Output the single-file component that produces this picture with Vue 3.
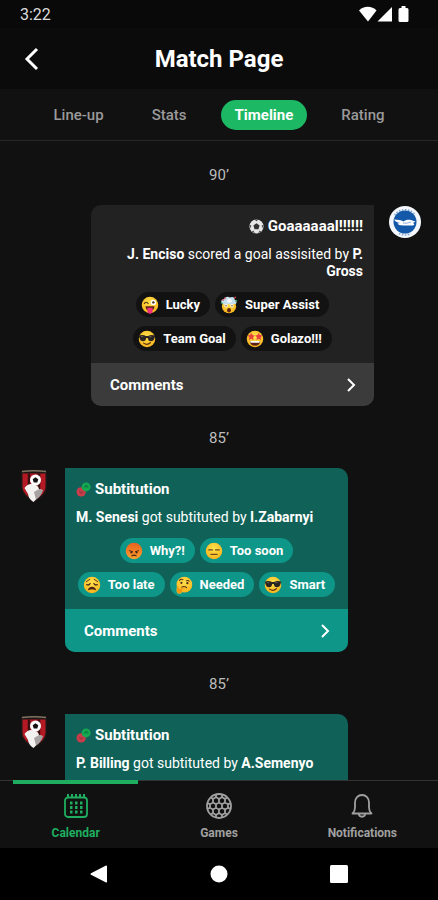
<template>
    <div class="screen">
        <!-- Shared drawings -->
        <svg class="sprites" aria-hidden="true" width="0" height="0">
            <defs>
                <radialGradient id="face" cx="50%" cy="35%" r="65%">
                    <stop offset="0" stop-color="#ffe14d" />
                    <stop offset="1" stop-color="#f9b41c" />
                </radialGradient>
                <linearGradient id="anger" x1="0" y1="0" x2="0" y2="1">
                    <stop offset="0" stop-color="#e8601f" />
                    <stop offset="1" stop-color="#fba22c" />
                </linearGradient>
            </defs>
            <symbol id="emoji-wink" viewBox="0 0 24 24">
                <circle cx="12" cy="12" r="11" fill="url(#face)" />
                <circle cx="16.5" cy="8.5" r="3.6" fill="#fff" />
                <circle cx="16.5" cy="8.5" r="1.6" fill="#4a2c17" />
                <path d="M4.5 10c1-2.2 3.8-2.2 5 0" stroke="#4a2c17" stroke-width="1.5" fill="none" stroke-linecap="round" />
                <path d="M6 13.5h12c0 4-2.500 6-6 6s-6-2-6-6z" fill="#5c2314" />
                <path d="M8.5 15.5h7v4.500a3.5 3.5 0 0 1-7 0z" fill="#f0307e" />
            </symbol>
            <symbol id="emoji-blown" viewBox="0 0 24 24">
                <circle cx="12" cy="13.5" r="9.5" fill="url(#face)" />
                <path d="M2.5 10c-2-3 0-6 3-5.5C6 1 11 0 13 2c4-2 7 0 6.500 3 3 0 3.500 4 1.500 5.500-3 1-5-1-7 1-2-1.500-4 .5-6-1-2 1.500-4 .8-5.500-.5z" fill="#c5dfee" />
                <path d="M10 5l2-2 3 1 1 4-4 1-3-1z" fill="#f4f8fa" />
                <path d="M3 5l2 1M19 3l2-2M6 2l1 2" stroke="#e43d50" stroke-width="1.5" />
                <path d="M1 9l3 1M20 7l3-1" stroke="#38a65a" stroke-width="1.5" />
                <circle cx="8" cy="13" r="2.2" fill="#fff" />
                <circle cx="16" cy="13" r="2.2" fill="#fff" />
                <circle cx="8" cy="13" r="0.9" fill="#4a2c17" />
                <circle cx="16" cy="13" r="0.9" fill="#4a2c17" />
                <ellipse cx="12" cy="19" rx="2.5" ry="3" fill="#5c2314" />
            </symbol>
            <symbol id="emoji-cool" viewBox="0 0 24 24">
                <circle cx="12" cy="12" r="11" fill="url(#face)" />
                <path d="M1 7.5c4-1.2 7-.8 9.5.5h3C16 6.7 19 6.3 23 7.5l-.8 2.5c-.8 4-2.500 5-5 5-2.700 0-3.700-2-4.200-4.500h-2C10.500 13 9.500 15 6.800 15c-2.500 0-4.200-1-5-5z" fill="#2a2522" />
                <path d="M4 9l3-.3M15 9l3-.3" stroke="#77706b" stroke-width="1" />
                <path d="M7.5 17.5c3 2.2 6 2 9-.5" stroke="#5c2e14" stroke-width="1.6" fill="none" stroke-linecap="round" />
            </symbol>
            <symbol id="emoji-star" viewBox="0 0 24 24">
                <circle cx="12" cy="12" r="11" fill="url(#face)" />
                <path d="M7 3.5l1.6 3.2 3.2.5-2.4 2.5.6 3.5L7 11.5l-3.2 1.7.7-3.5L2.2 7.200l3.3-.5zM17 3.5l1.5 3.2 3.3.5-2.3 2.5.7 3.5-3.2-1.7-3 1.7.6-3.5-2.4-2.5 3.2-.5z" fill="#e8413f" />
                <path d="M5 14.5h14c-.5 4.5-3.3 6.5-7 6.5s-6.5-2-7-6.5z" fill="#5c2314" />
                <path d="M5.5 14.5h13l-.6 2.5H6.1z" fill="#fff" />
            </symbol>
            <symbol id="emoji-angry" viewBox="0 0 24 24">
                <circle cx="12" cy="12" r="11" fill="url(#anger)" />
                <path d="M6 11.5l4 1.5M18 11.5l-4 1.5" stroke="#4a2414" stroke-width="1.4" stroke-linecap="round" />
                <circle cx="8.5" cy="14" r="1.4" fill="#4a2414" />
                <circle cx="15.5" cy="14" r="1.4" fill="#4a2414" />
                <path d="M9 18.5c2-1.3 4-1.3 6 0" stroke="#4a2414" stroke-width="1.4" fill="none" stroke-linecap="round" />
            </symbol>
            <symbol id="emoji-flat" viewBox="0 0 24 24">
                <circle cx="12" cy="12" r="11" fill="url(#face)" />
                <path d="M5 10.5h5M14 10.5h5M8 16.5h8" stroke="#6b4a1c" stroke-width="1.7" stroke-linecap="round" />
            </symbol>
            <symbol id="emoji-weary" viewBox="0 0 24 24">
                <circle cx="12" cy="12" r="11" fill="url(#face)" />
                <path d="M4.5 7.5L9 4.500M19.5 7.5L15 4.500" stroke="#5c3414" stroke-width="1.3" stroke-linecap="round" />
                <path d="M5 11.500c1.500.8 3.5.3 4.500-1.500M19 11.500c-1.500.8-3.5.3-4.500-1.500" stroke="#4a2c17" stroke-width="1.7" fill="none" stroke-linecap="round" />
                <path d="M6.5 19.5c0-7 11-7 11 0-2.5-1.8-8.5-1.8-11 0z" fill="#4a2414" />
            </symbol>
            <symbol id="emoji-think" viewBox="0 0 24 24">
                <circle cx="12.5" cy="11.5" r="10.5" fill="url(#face)" />
                <path d="M6 6c1-1.5 3-1.8 4.5-1M15 6.500c1.5-.8 3-.5 4 .5" stroke="#5c3414" stroke-width="1.4" fill="none" stroke-linecap="round" />
                <circle cx="8.5" cy="9" r="1.5" fill="#4a2c17" />
                <circle cx="16.5" cy="9.5" r="1.5" fill="#4a2c17" />
                <path d="M9 15c2.5-1.3 4.5-1 6.5.5" stroke="#4a2c17" stroke-width="1.5" fill="none" stroke-linecap="round" />
                <path d="M3 14.5c1-1.5 2.5-.8 2.500.7v1.800l7-2c1.500-.3 2 1.500.5 2l-3.500 1.300c1.500 2-.5 5.200-4 5.200C2.500 23.500 1.500 19 3 14.500z" fill="#f2960e" stroke="#ffd149" stroke-width="0.6" />
            </symbol>
        </svg>

        <!-- Status bar -->
        <div class="status-bar">
            <span>3:22</span>
            <svg aria-hidden="true" width="50" height="16" viewBox="0 0 50 16" fill="#fff">
                <path d="M0 4.500C4.500-.5 13-.5 17.500 4.500L9 15.500z" />
                <path d="M33 1v14.500H18.500z" />
                <path d="M42.500 0h4v2H48a1.500 1.500 0 0 1 1.500 1.500v11A1.500 1.500 0 0 1 48 16h-7a1.500 1.500 0 0 1-1.500-1.500v-11A1.500 1.500 0 0 1 41 2h1.500z" />
            </svg>
        </div>

        <header class="header">
            <button class="back" type="button" aria-label="Back">
                <svg aria-hidden="true" width="16" height="24" viewBox="0 0 16 24">
                    <path d="M13 2L3 12l10 10" stroke="currentColor" stroke-width="3" fill="none" />
                </svg>
            </button>
            <h1>Match Page</h1>
        </header>

        <div class="tabs" role="tablist">
            <button v-for="tab in tabs" 
            :key="tab" 
            class="tab" 
            :class="{ active: tab === activeTab }"
            type="button" 
            role="tab" 
            :aria-selected="tab === activeTab"
            @click="activeTab = tab">{{ tab }}</button>
        </div>

        <!-- Timeline -->
        <main class="timeline">
            <template v-for="event in events" :key="event.id">
                <div class="minute">{{ event.minute }}’</div>
                <div class="event" :class="event.kind">
                    <svg v-if="event.kind === 'goal'" class="badge" role="img" aria-label="Brighton" width="32" height="32" viewBox="0 0 32 32">
                        <circle cx="16" cy="16" r="16" fill="#f4f7fb" />
                        <path id="ring" d="M5.500 9a13 13 0 0 1 21 0M10 27.500a13 13 0 0 0 12 0" fill="none" stroke="#7fa3d3" stroke-width="1.5" stroke-dasharray="1.500 1.500" />
                        <circle cx="16" cy="16" r="11.500" fill="#1459a9" />
                        <path d="M5 13.500c4 .3 7 .5 9.500 2 2-1.800 5-2.300 7.500-1.500l2.500 1 2 .5-2.500 1.500c2 1 1.500 2.500-1 2.500H14c-3 0-5-1-5.500-2L11 17c-3-.5-5-1.500-6-3.500z" fill="#fff" />
                        <path d="M14 17c3 .5 5 0 8-1" stroke="#8bb0da" stroke-width="1" fill="none" />
                    </svg>
                    <svg v-else class="badge" role="img" aria-label="Bournemouth" width="28" height="34" viewBox="0 0 28 34">
                        <path d="M1 1.500c8-1.500 18-1.500 26 0v16c0 8-6 12-13 16-7-4-13-8-13-16z" fill="#1c1716" />
                        <path d="M2.500 4.500h23V17c0 7-5 10.500-11.500 14.500C7.500 27.500 2.500 24 2.500 17z" fill="#b51924" />
                        <path d="M9 4.500v22M19 4.500v20" stroke="#38100f" stroke-width="2.500" />
                        <path d="M2 2.500c8-1 16-1 24 0" stroke="#7d7360" stroke-width="1.500" fill="none" />
                        <path d="M4.500 19c3-4.500 7-5 10-3 2 0 4 1.500 4.500 4l3.500 1c-1 4-4.500 7.500-9 12-4-3-5-5-5.500-8z" fill="#f4f2f1" />
                        <path d="M14 23l5-3 4 1c-1 4-4 8-7 9.500z" fill="#a8a3a3" />
                        <circle cx="15.500" cy="11" r="5.500" fill="#fff" />
                        <path d="M15.500 8.300l2.800 2-1 3.200h-3.600l-1-3.200z" fill="#171313" />
                    </svg>

                    <article class="card">
                        <div class="card-body">
                            <h2>
                                <svg v-if="event.kind === 'goal'" aria-hidden="true" width="15" height="15" viewBox="0 0 16 16">
                                    <circle cx="8" cy="8" r="7.500" fill="#e6e6e6" />
                                    <path d="M8 4.500l3.300 2.400-1.200 3.900H5.900L4.700 6.900z" fill="#333" />
                                    <path d="M6 .8h4L8 2.500zM.6 6l1.900.8L1.800 10zM15.400 6l-1.900.8.7 3.200zM3 13.500l1.500-1.300 2 2.700zM13 13.500l-1.500-1.300-2 2.700z" fill="#4a4a4a" />
                                </svg>
                                <svg v-else aria-hidden="true" width="15" height="15" viewBox="0 0 16 16">
                                    <circle cx="5.500" cy="10.500" r="5" fill="#c93c4a" />
                                    <circle cx="10.800" cy="5.200" r="4.800" fill="#14a850" />
                                    <path d="M3.500 9.500l2 2.500 2-2" stroke="#9a3540" stroke-width="1.200" fill="none" />
                                    <path d="M9 6l2-2.500L13 6" stroke="#0d7a45" stroke-width="1.200" fill="none" />
                                </svg>
                                {{ event.title }}
                            </h2>
                            <p><b>{{ event.player }}</b> {{ event.action }} <b>{{ event.other }}</b></p>
                            <div v-if="event.reactions.length" class="reactions">
                                <button v-for="reaction in event.reactions" :key="reaction.label" class="chip" type="button">
                                    <svg aria-hidden="true" width="18" height="18"><use :href="'#emoji-' + reaction.emoji" /></svg>
                                    {{ reaction.label }}
                                </button>
                            </div>
                        </div>
                        <button v-if="event.reactions.length" class="comments" type="button">
                            Comments
                            <svg aria-hidden="true" width="10" height="14" viewBox="0 0 10 14">
                                <path d="M2 1l6 6-6 6" stroke="currentColor" stroke-width="2" fill="none" />
                            </svg>
                        </button>
                    </article>
                </div>
            </template>
        </main>

        <!-- Bottom navigation -->
        <nav class="bottom-nav">
            <a class="active" href="#calendar">
                <svg aria-hidden="true" width="26" height="26" viewBox="0 0 26 26" fill="none" stroke="currentColor">
                    <rect x="2" y="4.500" width="22" height="19.500" rx="3" stroke-width="1.800" />
                    <path d="M5 1v4M9 1v4M13 1v4M17 1v4M21 1v4" stroke-width="2" />
                    <path d="M7 10h2.500M12 10h2.500M17 10h2.500M7 14.500h2.500M12 14.500h2.500M17 14.500h2.500M7 19h2.500M12 19h2.500M17 19h2.500" stroke-width="2.800" />
                </svg>
                Calendar
            </a>
            <a href="#games">
                <svg aria-hidden="true" width="26" height="26" viewBox="0 0 26 26" fill="none" stroke="currentColor" stroke-width="1.800">
                    <circle cx="13" cy="13" r="12" />
                    <path d="M13 9.500l3 1.700v3.600l-3 1.700-3-1.700v-3.600zM13 9.500V6M16 11.200l3-1.700M16 14.800l3 1.700M13 16.500V20M10 14.800l-3 1.700M10 11.200L7 9.500" />
                    <path d="M13 6l3-2 3 2v3.500l3 1.700v3.600l-3 1.700V20l-3 2-3-2-3 2-3-2v-3.500l-3-1.700v-3.600l3-1.700V6l3-2z" />
                    <path d="M10 4V1.500M16 4V1.500M19 6l2-1.500M22 11.200l3-1M22 14.800l3 1M19 20l2 1.500M16 22v2.500M10 22v2.500M7 20l-2 1.500M4 14.800l-3 1M4 11.200l-3-1M7 6L5 4.500" />
                </svg>
                Games
            </a>
            <a href="#notifications">
                <svg aria-hidden="true" width="26" height="26" viewBox="0 0 26 26" fill="none" stroke="currentColor" stroke-width="1.800">
                    <path d="M3.500 20.500c2-1.800 2.500-3.200 2.500-6V9.500c0-4.500 3-7.500 7-7.500s7 3 7 7.500v5c0 2.800.5 4.200 2.500 6z" stroke-linejoin="round" />
                    <path d="M9.800 20.500c0 4.300 6.400 4.300 6.400 0" />
                </svg>
                Notifications
            </a>
        </nav>

        <!-- System buttons -->
        <div class="system-bar">
            <button type="button" aria-label="System back">
                <svg aria-hidden="true" width="18" height="18" viewBox="0 0 18 18"><path d="M17 1v16a1 1 0 0 1-1 .6L1 9.800a1 1 0 0 1 0-1.600L16 .4a1 1 0 0 1 1 .6z" fill="#fff" /></svg>
            </button>
            <button type="button" aria-label="Home">
                <svg aria-hidden="true" width="18" height="18" viewBox="0 0 18 18"><circle cx="9" cy="9" r="8.500" fill="#fff" /></svg>
            </button>
            <button type="button" aria-label="Recent apps">
                <svg aria-hidden="true" width="18" height="18" viewBox="0 0 18 18"><rect width="18" height="18" rx="1.500" fill="#fff" /></svg>
            </button>
        </div>
    </div>
</template>

<script setup>
import { ref } from 'vue';

const tabs = ['Line-up', 'Stats', 'Timeline', 'Rating']
const activeTab = ref('Timeline');

const events = [
    {
        id: 1,
        kind: 'goal',
        minute: 90,
        title: 'Goaaaaaal!!!!!!',
        player: 'J. Enciso',
        action: 'scored a goal assisited by',
        other: 'P. Gross',
        reactions: [
            { emoji: 'wink', label: 'Lucky' },
            { emoji: 'blown', label: 'Super Assist' },
            { emoji: 'cool', label: 'Team Goal' },
            { emoji: 'star', label: 'Golazo!!!' }
        ]
    },
    {
        id: 2,
        kind: 'sub',
        minute: 85,
        title: 'Subtitution',
        player: 'M. Senesi',
        action: 'got subtituted by',
        other: 'I.Zabarnyi',
        reactions: [
            { emoji: 'angry', label: 'Why?!' },
            { emoji: 'flat', label: 'Too soon' },
            { emoji: 'weary', label: 'Too late' },
            { emoji: 'think', label: 'Needed' },
            { emoji: 'cool', label: 'Smart' }
        ]
    },
    {
        id: 3,
        kind: 'sub',
        minute: 85,
        title: 'Subtitution',
        player: 'P. Billing',
        action: 'got subtituted by',
        other: 'A.Semenyo',
        reactions: []
    }
]
</script>

<style>
body {
    margin: 0;
    background: #111;
}
</style>

<style scoped>
.screen {
    display: flex;
    flex-direction: column;
    height: 100vh;
    background: #111;
    color: #fff;
    font-family: Roboto, "Liberation Sans", sans-serif;
    font-size: 14px;
}
.sprites { position: absolute; }
button {
    border: none;
    background: none;
    padding: 0;
    color: inherit;
    font: inherit;
    cursor: pointer;
}
svg {
    display: block;
    flex: none;
}

.status-bar {
    display: flex;
    align-items: center;
    justify-content: space-between;
    height: 28px;
    padding: 0 29px 0 20px;
    background: #090909;
    color: #ddd;
    font-size: 16px;
}

.header {
    display: grid;
    grid-template-columns: 40px 1fr 40px;
    align-items: center;
    height: 61px;
    padding: 0 12px;
    background: #0b0b0b;
}
.back {
    display: grid;
    place-items: center;
    height: 40px;
}
.header h1 {
    margin: 0;
    font-size: 24px;
    font-weight: 700;
    text-align: center;
}

.tabs {
    display: flex;
    align-items: center;
    justify-content: center;
    gap: 20px;
    height: 51px;
    border-bottom: 1px solid #272727;
}
.tab {
    height: 30px;
    padding: 0 14px;
    border-radius: 15px;
    color: #9a9a9a;
    font-size: 15px;
    font-weight: 500;
}
.tab.active {
    background: #1db863;
    color: #fff;
    font-weight: 700;
}

/* Timeline */
.timeline {
    flex: 1;
    min-height: 0;
    overflow: auto;
    scrollbar-width: none;
    padding-top: 2px;
}
.minute {
    padding: 22px 0 20px;
    color: #bdbdbd;
    font-size: 15px;
    line-height: 20px;
    text-align: center;
}
.event {
    display: flex;
    align-items: flex-start;
    gap: 17px;
    padding: 0 90px 0 20px;
}
.event.goal {
    flex-direction: row-reverse;
    gap: 15px;
    padding: 0 17px 0 91px;
}
.badge { margin-top: 1px; }
.card {
    flex: 1;
    overflow: hidden;
    border-radius: 0 10px 10px 10px;
    background: #106258;
}
.goal .card {
    border-radius: 10px 0 10px 10px;
    background: #222;
}
.card-body { padding: 11px 11px 12px; }
.card h2 {
    display: flex;
    align-items: center;
    gap: 4px;
    margin: 0 0 10px;
    font-size: 15px;
    font-weight: 700;
    line-height: 20px;
}
.card p {
    margin: 0 0 12px;
    font-size: 14px;
    line-height: 17px;
}
.card b { font-weight: 700; }
.goal h2 { justify-content: flex-end; }
.goal p { text-align: right; }
.reactions {
    display: flex;
    flex-wrap: wrap;
    justify-content: center;
    gap: 9px 5px;
}
.chip {
    display: flex;
    align-items: center;
    gap: 7px;
    height: 25px;
    padding: 0 10px 0 5px;
    border-radius: 13px;
    background: #0e9688;
    font-size: 13px;
    font-weight: 700;
}
.goal .chip { background: #121212; }
.comments {
    display: flex;
    align-items: center;
    justify-content: space-between;
    width: 100%;
    height: 43px;
    padding: 0 18px 0 19px;
    background: #0e9688;
    font-size: 15px;
    font-weight: 700;
}
.goal .comments { background: #3b3b3b; }

/* Bottom navigation */
.bottom-nav {
    display: grid;
    grid-template-columns: repeat(3, 1fr);
    height: 67px;
    padding: 0 4px;
    border-top: 1px solid #333;
}
.bottom-nav a {
    position: relative;
    display: flex;
    flex-direction: column;
    align-items: center;
    gap: 6px;
    padding-top: 12px;
    color: #a0a0a0;
    font-size: 12px;
    font-weight: 700;
    line-height: 16px;
    text-decoration: none;
}
.bottom-nav a.active { color: #1fae60; }
.bottom-nav a.active::before {
    content: '';
    position: absolute;
    top: -1px;
    left: 9px;
    right: 9px;
    height: 4px;
    background: #1fae60;
}

.system-bar {
    display: grid;
    grid-template-columns: repeat(3, 1fr);
    place-items: center;
    height: 52px;
    padding: 0 39px;
    background: #000;
}
</style>
